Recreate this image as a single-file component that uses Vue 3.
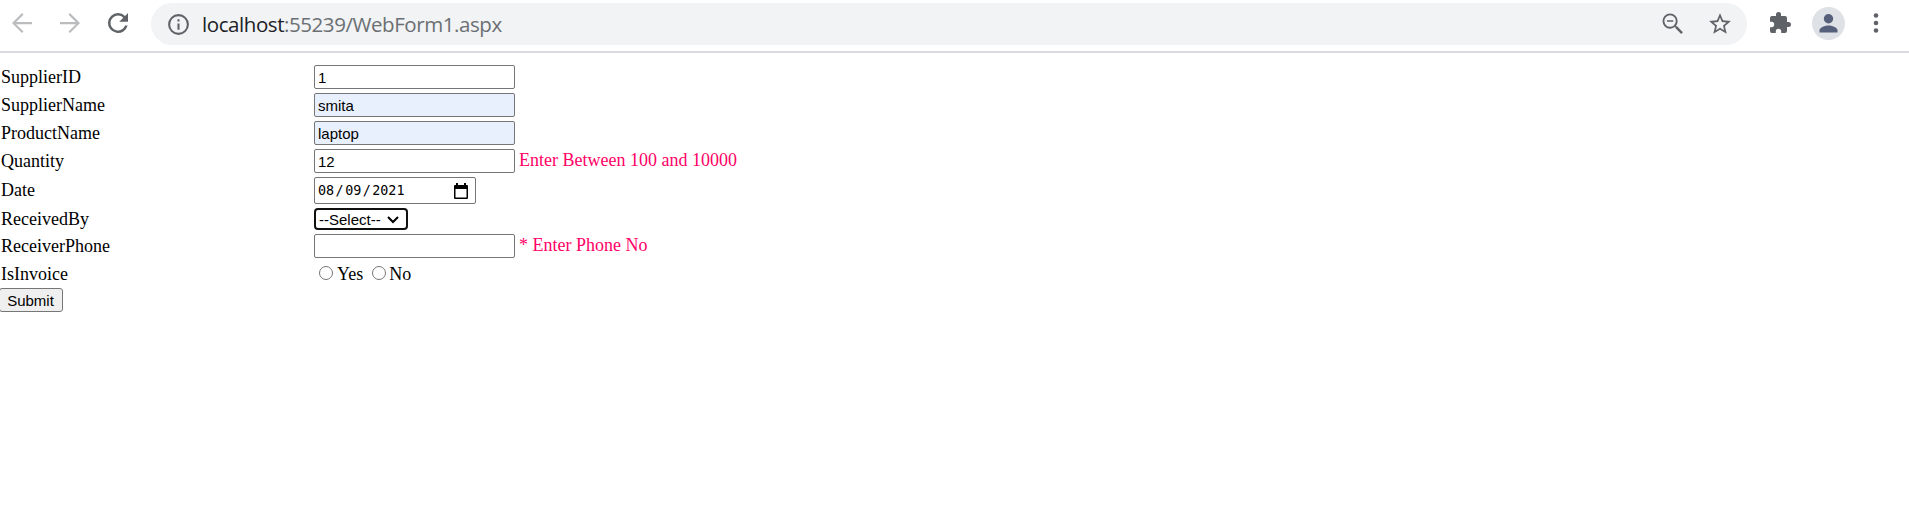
<script setup>
import { ref } from 'vue'

const supplierId = ref('1')
const supplierName = ref('smita')
const productName = ref('laptop')
const quantity = ref('12')
const phone = ref('')
</script>

<template>
  <div class="window">
    <header class="toolbar">
      <svg class="icon nav faded" viewBox="0 0 24 24"><path d="M20 11.1H7.3l5.9-5.8L12 4l-8 8 8 8 1.2-1.3-5.9-5.8H20z" /></svg>
      <svg class="icon nav faded" viewBox="0 0 24 24"><path d="M4 11.1h12.7l-5.9-5.8L12 4l8 8-8 8-1.2-1.3 5.9-5.8H4z" /></svg>
      <svg class="icon nav reload" viewBox="0 0 24 24"><path d="M17.65 6.35A7.96 7.96 0 0 0 12 4a8 8 0 1 0 7.73 10h-2.08A6 6 0 1 1 12 6c1.66 0 3.14.69 4.22 1.78L13 11h7V4z" /></svg>
      <div class="omnibox">
        <svg class="icon info" viewBox="0 0 24 24"><path d="M11 7h2v2h-2zm0 4h2v6h-2zm1-9a10 10 0 1 0 0 20 10 10 0 0 0 0-20zm0 18a8 8 0 1 1 0-16 8 8 0 0 1 0 16z" /></svg>
        <span class="url"><span class="host">localhost</span>:55239/WebForm1.aspx</span>
        <svg class="icon lens" viewBox="0 0 24 24"><path d="M15.5 14h-.79l-.28-.27A6.47 6.47 0 0 0 16 9.5 6.5 6.5 0 1 0 9.5 16c1.61 0 3.09-.59 4.23-1.57l.27.28v.79l5 4.99L20.49 19zm-6 .4a4.9 4.9 0 1 1 0-9.8 4.9 4.9 0 0 1 0 9.8zM6.8 8.8h5.4v1.3H6.8z" /></svg>
        <svg class="icon star" viewBox="0 0 24 24"><path d="M22 9.24l-7.19-.62L12 2 9.19 8.63 2 9.24l5.46 4.73L5.82 21 12 17.27 18.18 21l-1.63-7.03zM12 15.4l-3.76 2.27 1-4.28-3.32-2.88 4.38-.38L12 6.1l1.71 4.04 4.38.38-3.32 2.88 1 4.28z" /></svg>
      </div>
      <svg class="icon puzzle" viewBox="0 0 24 24"><path d="M20.5 11H19V7a2 2 0 0 0-2-2h-4V3.5a2.5 2.5 0 0 0-5 0V5H4a2 2 0 0 0-2 2v3.8h1.5a2.7 2.7 0 0 1 0 5.4H2V20a2 2 0 0 0 2 2h3.8v-1.5a2.7 2.7 0 0 1 5.4 0V22H17a2 2 0 0 0 2-2v-4h1.5a2.5 2.5 0 0 0 0-5z" /></svg>
      <svg class="avatar" viewBox="0 0 33 33"><circle cx="16.5" cy="16.5" r="16.5" fill="#dee1e6" /><circle cx="16.5" cy="11.8" r="4.7" fill="#56607a" /><path d="M7.5 25.5v-2.3c0-3 6-4.7 9-4.7s9 1.7 9 4.7v2.3z" fill="#56607a" /></svg>
      <svg class="dots" viewBox="0 0 6 20"><circle cx="3" cy="2.5" r="2.3" /><circle cx="3" cy="10" r="2.3" /><circle cx="3" cy="17.5" r="2.3" /></svg>
    </header>

    <form class="form" @submit.prevent>
      <div class="row"><label>SupplierID</label><input v-model="supplierId" class="field" type="text" /></div>
      <div class="row"><label>SupplierName</label><input v-model="supplierName" class="field filled" type="text" /></div>
      <div class="row"><label>ProductName</label><input v-model="productName" class="field filled" type="text" /></div>
      <div class="row"><label>Quantity</label><input v-model="quantity" class="field" type="text" /><span class="error">Enter Between 100 and 10000</span></div>
      <div class="row date-row">
        <label>Date</label>
        <div class="date">
          <span>08</span><span class="slash">/</span><span>09</span><span class="slash">/</span><span>2021</span>
          <svg class="calendar" viewBox="0 0 14 16"><path d="M2 0h2v2h6V0h2v2h1q1 0 1 1v12q0 1-1 1H1q-1 0-1-1V3q0-1 1-1h1zM1.5 6v8.5h11V6z" /></svg>
        </div>
      </div>
      <div class="row select-row">
        <label>ReceivedBy</label>
        <div class="select" tabindex="0">
          <span>--Select--</span>
          <svg class="chevron" viewBox="0 0 12 8"><path d="M1 1l5 5 5-5" /></svg>
        </div>
      </div>
      <div class="row phone-row"><label>ReceiverPhone</label><input v-model="phone" class="field" type="text" /><span class="error">* Enter Phone No</span></div>
      <div class="row radio-row">
        <label>IsInvoice</label>
        <div class="radios">
          <span class="radio"></span><span class="yes">Yes</span>
          <span class="radio"></span><span class="no">No</span>
        </div>
      </div>
      <button class="submit" type="submit">Submit</button>
    </form>
  </div>
</template>

<style>
html, body { background: #fff; overflow: hidden; }
</style>

<style scoped>
* { box-sizing: border-box; }
.window { height: 511px; overflow: hidden; background: #fff; }
.toolbar { display: flex; align-items: center; height: 53px; padding: 0 0 5px 7px; border-bottom: 2px solid #dadbe0; }
.icon { flex: none; display: block; fill: #5f6368; }
.nav { width: 30px; height: 30px; margin-right: 18px; }
.faded { fill: #babcbe; }
.reload { margin-right: 18px; }
.omnibox { display: flex; align-items: center; flex: none; width: 1596px; height: 42px; margin-top: 2px; border-radius: 21px; background: #f1f3f4; padding-left: 15px; }
.info { width: 25px; height: 25px; }
.url { margin-left: 11px; margin-right: auto; font: 20.5px/28px "Open Sans", "Noto Sans", sans-serif; letter-spacing: -0.43px; color: #6b6f73; white-space: nowrap; }
.host { color: #202124; }
.lens { width: 28px; height: 28px; margin-right: 20px; }
.star { width: 26px; height: 26px; margin-right: 14px; }
.puzzle { width: 24px; height: 24px; margin-left: 21px; }
.avatar { flex: none; width: 33px; height: 33px; margin: 1px 0 0 20px; }
.dots { flex: none; width: 6px; height: 20px; margin-left: 28px; fill: #5f6368; }

.form { padding-top: 10px; font: 18px/20px "Liberation Serif", "Times New Roman", serif; color: #000; }
.row { display: flex; align-items: center; height: 28px; }
.row label { flex: none; width: 314px; padding-left: 1px; }
.field { flex: none; width: 201px; height: 24px; margin: 0; padding: 1px 3px 0; border: 1px solid #767676; border-radius: 2px; background: #fff; font: 15px "Liberation Sans", Arial, sans-serif; color: #000; outline: none; }
.filled { background: #e8f0fe; }
.error { margin-left: 4px; padding-bottom: 2px; color: #ff0066; white-space: nowrap; }
.date-row { height: 30px; }
.date { display: flex; align-items: center; width: 162px; height: 27px; border: 1px solid #767676; border-radius: 2px; padding: 1px 7px 0 3px; font: 13.4px "DejaVu Sans Mono", monospace; }
.slash { width: 11px; text-align: center; }
.calendar { width: 14px; height: 16px; margin-left: auto; fill: #000; }
.select-row { height: 28px; }
.select { display: flex; align-items: center; width: 94px; height: 22px; border: 2px solid #101010; border-radius: 4px; padding: 1px 7px 0 3px; font: 15px/18px "Liberation Sans", Arial, sans-serif; outline: none; }
.chevron { width: 12px; height: 8px; margin-left: auto; fill: none; stroke: #000; stroke-width: 2; }
.phone-row { height: 26px; }
.radio-row { height: 29px; }
.radios { display: flex; align-items: center; padding-left: 5px; }
.radio { width: 14px; height: 14px; margin-bottom: 2px; border: 1px solid #767676; border-radius: 50%; }
.yes { margin: 0 9px 0 4px; }
.no { margin-left: 3px; }
.submit { display: block; width: 64px; height: 24px; margin: 0 0 0 -1px; padding: 2px 1px 0 0; border: 1px solid #767676; border-radius: 3px; background: #efefef; font: 15px/18px "Liberation Sans", Arial, sans-serif; color: #000; }
</style>
